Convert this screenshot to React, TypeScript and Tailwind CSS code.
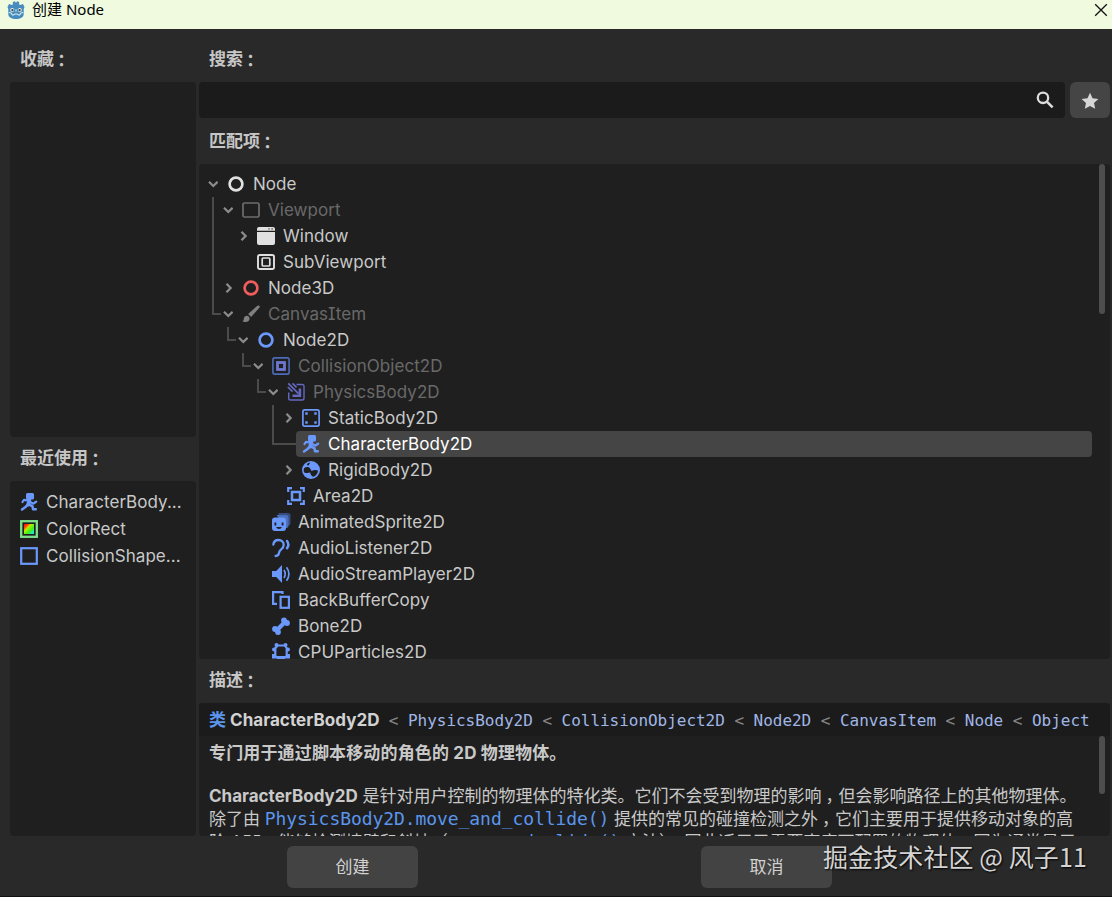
import React from "react";

const BLUE = "#6b98fb";

type IconName =
  | "node" | "viewport" | "window" | "subviewport" | "node3d" | "canvas" | "node2d"
  | "collision" | "physics" | "static" | "character" | "rigid" | "area" | "sprite"
  | "listener" | "audio" | "copy" | "bone" | "particles" | "colorrect" | "shape";

const icons: Record<IconName, React.ReactNode> = {
  node: <circle cx="9" cy="9" r="6.4" fill="none" stroke="#e0e0e0" strokeWidth="2.7" />,
  node3d: <circle cx="9" cy="9" r="6.4" fill="none" stroke="#f05d5d" strokeWidth="2.7" />,
  node2d: <circle cx="9" cy="9" r="6.4" fill="none" stroke={BLUE} strokeWidth="2.7" />,
  viewport: <rect x="1" y="2" width="16" height="14" rx="1.5" fill="none" stroke="#6e6e6e" strokeWidth="1.7" />,
  window: (
    <g fill="#e0e0e0">
      <path d="M2 0h14a2 2 0 0 1 2 2v1.7H0V2a2 2 0 0 1 2-2z" />
      <path d="M0 5h18v11a2 2 0 0 1-2 2H2a2 2 0 0 1-2-2z" />
      <path d="M11.5 1.2h1v1.2h-1zM14.5 1.2h1.2v1.400h-1.200z" fill="#1f1f1f" />
    </g>
  ),
  subviewport: (
    <g fill="none" stroke="#e0e0e0">
      <rect x="1" y="2" width="16" height="14" rx="1.8" strokeWidth="1.9" />
      <rect x="5.2" y="5" width="7.6" height="8" rx="1" strokeWidth="1.7" />
    </g>
  ),
  canvas: (
    <g fill="#808080">
      <path d="M17.3.8c.8.8.4 1.600-.2 2.300l-8 9-3-3 9-8c.7-.6 1.500-1 2.200-.3z" />
      <path d="M5 10.700a3 3 0 0 1 2.600 2.800C7.600 16 5.600 17 3.600 17c-1.400 0-2.600-.4-3.100-1 1.600-.3 1.100-1.500 1.400-3 .3-1.400 1.600-2.400 3.100-2.300z" />
    </g>
  ),
  collision: (
    <g fill="none">
      <rect x=".9" y=".9" width="16.200" height="16.200" rx="1.800" stroke="#4c6bb8" strokeWidth="1.600" />
      <rect x="5.500" y="5.500" width="7" height="7" stroke="#6f76d0" strokeWidth="2.800" />
    </g>
  ),
  physics: (
    <g fill="none" stroke="#6468c0">
      <path d="M9.500 1.500H15.200a1.800 1.800 0 0 1 1.800 1.800V15.200a1.800 1.800 0 0 1-1.800 1.800H3.500a1.800 1.800 0 0 1-1.800-1.800V9.500" strokeWidth="1.400" />
      <path d="M.8 4 5.500 8.700M1.200.3 11.500 10.600M5.500.3l4 4" strokeWidth="1.700" />
      <path d="M12.900 5.500v7.300H5.500" strokeWidth="2.500" />
    </g>
  ),
  static: (
    <g>
      <rect x=".9" y=".9" width="16.200" height="16.200" rx="1.800" fill="none" stroke={BLUE} strokeWidth="1.700" />
      <path d="M3.300 3.300h2.400v2.400H3.300zM12.300 3.300h2.400v2.400h-2.400zM3.300 12.300h2.400v2.400H3.300zM12.300 12.300h2.400v2.400h-2.400z" fill={BLUE} />
    </g>
  ),
  character: (
    <g fill="none" stroke={BLUE} strokeLinecap="round" strokeLinejoin="round">
      <path d="M7.500 0h5a1.500 1.500 0 0 1 1.500 1.500v3.500a1.500 1.500 0 0 1-1.500 1.500h-5A1.500 1.500 0 0 1 6 5V1.500A1.500 1.500 0 0 1 7.500 0z" fill={BLUE} stroke="none" />
      <path d="M9.300 6 8.400 11.500" strokeWidth="4" />
      <path d="M8.500 7.500 4 6.800 2.500 9M10.300 8.800l2.700 1.900 3.200-2" strokeWidth="2.200" />
      <path d="M7.800 11.700 5.500 14 2 16.500M9.500 11.700l3 1.600.5 3 2.800-.1" strokeWidth="2.500" />
    </g>
  ),
  rigid: (
    <g>
      <circle cx="9" cy="9" r="9" fill={BLUE} />
      <path d="M2 7.200C4 5.600 6.700 5.800 8 7.200L9.600 10c2.200-1.300 4.400-1.300 6.400-.4a7.500 7.500 0 0 1-4.500 6.200C9.600 15.300 8.500 13.700 8.200 11.600 6 12.400 3.600 12.200 1.900 11.200a7.500 7.500 0 0 1 .1-4zM4.700 3.200C5.800 2.200 7.200 1.700 8.400 1.600 7.400 2.600 7 3.600 6.800 4.600 6 4.400 5.200 4 4.700 3.200z" fill="#1f1f1f" />
    </g>
  ),
  area: (
    <g fill="none" stroke={BLUE} strokeWidth="2.200">
      <path d="M1.200 5V1.200H5M13 1.200h3.800V5M16.800 13v3.800H13M5 16.800H1.200V13" />
      <rect x="5" y="5" width="8" height="8" strokeWidth="2.500" />
    </g>
  ),
  sprite: (
    <g>
      <path d="M6.500 0H16a2.500 2.500 0 0 1 2.500 2.500V10a2.500 2.500 0 0 1-2.500 2.500V4L6.500 2z" fill="#344a80" />
      <path d="M4.500 2H14a2.500 2.500 0 0 1 2.500 2.500v8a2.500 2.500 0 0 1-2.500 2.500z" fill="#4d70bd" />
      <rect x="0" y="4.500" width="14" height="13.500" rx="3" fill={BLUE} />
      <path d="M2.500 9.500h1.800v3H2.500zM9.700 9.500h1.800v3H9.700zM4.200 14h5.600c-.5 2.600-5.100 2.600-5.600 0z" fill="#1f1f1f" />
    </g>
  ),
  listener: (
    <g fill="none" stroke={BLUE} strokeWidth="2.300" strokeLinecap="round">
      <path d="M1.300 5.500C1.800 2.500 3.800 1 6.500 1c3 0 5.200 2 5.200 4.700 0 4.800-4.200 4.200-4.600 7.800C6.900 15.800 6 17 3.600 17" />
      <path d="M15 2c1.700 2.300 1.700 5 0 7.300" strokeWidth="2.500" />
    </g>
  ),
  audio: (
    <g>
      <path d="M0 6h4.200L10 0v18l-5.800-6H0z" fill={BLUE} />
      <path d="M12 5c1.500 2.500 1.500 5.500 0 8M14.500 2.200c3.200 4 3.200 9.500 0 13.600" fill="none" stroke={BLUE} strokeWidth="1.700" />
    </g>
  ),
  copy: (
    <g fill="none" stroke={BLUE} strokeWidth="2.200">
      <path d="M10.500 3V1.100H1.100v11.700H5" />
      <rect x="8.600" y="5.800" width="8.300" height="11" />
    </g>
  ),
  bone: (
    <g fill={BLUE}>
      <path d="M4.300 10.700 10.700 4.300 13.700 7.300 7.300 13.700z" />
      <circle cx="12" cy="3.300" r="2.900" /><circle cx="15" cy="6" r="2.900" />
      <circle cx="3" cy="12" r="2.900" /><circle cx="6" cy="15" r="2.900" />
    </g>
  ),
  particles: (
    <g fill="none" stroke={BLUE}>
      <path d="M5.500 2.500h7.500l1.700 2.700v7.600L13.200 14H4.800l-1.500-1.200V5.200z" strokeWidth="2.200" />
      <g fill={BLUE} stroke="none">
        <circle cx="4.500" cy="2" r="2" /><circle cx="13.500" cy="2" r="2" />
        <circle cx="2" cy="6.500" r="2" /><circle cx="16" cy="6.500" r="2" />
        <path d="M0 11h4v4.500H0zM14 11h4v4.500h-4zM4.500 13.500h9v4h-9z" />
      </g>
    </g>
  ),
  colorrect: (
    <g>
      <rect x="1.200" y="1.200" width="15.600" height="15.600" fill="none" stroke="#7de08a" strokeWidth="2.300" />
      <path d="M4 4h10v10H4z" fill="url(#hue)" />
      <defs>
        <linearGradient id="hue" x1="0" y1="0" x2="1" y2="1">
          <stop offset=".1" stopColor="#ff1800" />
          <stop offset=".28" stopColor="#ff7000" />
          <stop offset=".36" stopColor="#b8f000" />
          <stop offset=".65" stopColor="#3cf018" />
          <stop offset=".9" stopColor="#20e8d0" />
        </linearGradient>
      </defs>
    </g>
  ),
  shape: <rect x="1.200" y="1.200" width="15.600" height="15.600" fill="none" stroke={BLUE} strokeWidth="2.200" />,
};

function Icon({ name }: { name: IconName }) {
  return (
    <svg width="18" height="18" viewBox="0 0 18 18" className="shrink-0 overflow-visible">
      {icons[name]}
    </svg>
  );
}

function Chevron({ open }: { open: boolean }) {
  return (
    <svg width="10" height="10" viewBox="0 0 10 10" fill="none" stroke="#8c8c8c" strokeWidth="2.300" className="shrink-0">
      {open ? <path d="M1 2.800 5.300 7 9.600 2.800" /> : <path d="M3.500.8 7.600 5 3.500 9.200" />}
    </svg>
  );
}

interface TreeItem {
  depth: number;
  icon: IconName;
  label: string;
  open?: boolean;
  dim?: boolean;
  selected?: boolean;
}

const tree: TreeItem[] = [
  { depth: 0, icon: "node", label: "Node", open: true },
  { depth: 1, icon: "viewport", label: "Viewport", open: true, dim: true },
  { depth: 2, icon: "window", label: "Window", open: false },
  { depth: 2, icon: "subviewport", label: "SubViewport" },
  { depth: 1, icon: "node3d", label: "Node3D", open: false },
  { depth: 1, icon: "canvas", label: "CanvasItem", open: true, dim: true },
  { depth: 2, icon: "node2d", label: "Node2D", open: true },
  { depth: 3, icon: "collision", label: "CollisionObject2D", open: true, dim: true },
  { depth: 4, icon: "physics", label: "PhysicsBody2D", open: true, dim: true },
  { depth: 5, icon: "static", label: "StaticBody2D", open: false },
  { depth: 5, icon: "character", label: "CharacterBody2D", selected: true },
  { depth: 5, icon: "rigid", label: "RigidBody2D", open: false },
  { depth: 4, icon: "area", label: "Area2D" },
  { depth: 3, icon: "sprite", label: "AnimatedSprite2D" },
  { depth: 3, icon: "listener", label: "AudioListener2D" },
  { depth: 3, icon: "audio", label: "AudioStreamPlayer2D" },
  { depth: 3, icon: "copy", label: "BackBufferCopy" },
  { depth: 3, icon: "bone", label: "Bone2D" },
  { depth: 3, icon: "particles", label: "CPUParticles2D" },
];

const indents = ["pl-[9px]", "pl-[24px]", "pl-[39px]", "pl-[54px]", "pl-[69px]", "pl-[84px]"];

function TreeRow({ item }: { item: TreeItem }) {
  const tone = item.selected ? "text-white" : item.dim ? "text-[#696969]" : "text-[#c9c9c9]";
  return (
    <div className={`flex h-[26px] items-center ${indents[item.depth]}`}>
      <div className="flex w-[13px] shrink-0">{item.open !== undefined && <Chevron open={item.open} />}</div>
      <div className={`flex h-[26px] flex-1 items-center gap-2 rounded pl-[6px] ${item.selected ? "bg-[#454545]" : ""}`}>
        <Icon name={item.icon} />
        <span className={`whitespace-nowrap tracking-[0.05px] ${tone}`}>{item.label}</span>
      </div>
    </div>
  );
}

const recent: { icon: IconName; label: string }[] = [
  { icon: "character", label: "CharacterBody..." },
  { icon: "colorrect", label: "ColorRect" },
  { icon: "shape", label: "CollisionShape..." },
];

const parents = ["PhysicsBody2D", "CollisionObject2D", "Node2D", "CanvasItem", "Node", "Object"];

function Heading({ children }: { children: React.ReactNode }) {
  return (
    <div className="flex h-[46px] shrink-0 items-center pl-[10px] font-bold text-[#c6c6c6]">
      <span>{children}</span>
      <span className="-ml-px font-['Noto_Sans_CJK_JP',sans-serif]">：</span>
    </div>
  );
}

function Comma() {
  return <span className="relative left-[4px]">，</span>;
}

function Code({ children }: { children: React.ReactNode }) {
  return (
    <span className="font-['DejaVu_Sans_Mono',monospace] text-[18px] leading-none tracking-[-0.07px] text-[#5b96ec]">
      {children}
    </span>
  );
}

function GodotLogo() {
  return (
    <svg width="18" height="18" viewBox="0 0 18 18" className="mt-px shrink-0">
      <path d="M.5 6 2 3 4.800 4 6 3.300 5.800 1 8 .3 9 2l1-1.700 2.200.7-.2 2.300 1.200.7L16 3l1.500 3-.8 2v5c0 3.500-3.300 5-7.700 5s-7.700-1.500-7.700-5V8z" fill="#478cbf" />
      <path d="M1.800 11.500 4.500 12l.5 2h2l.4-1h3.200l.4 1h2l.5-2 2.700-.5" fill="none" stroke="#e3f1ee" strokeWidth="1" />
      <circle cx="5.200" cy="9" r="2" fill="#e3f1ee" /><circle cx="12.800" cy="9" r="2" fill="#e3f1ee" />
      <circle cx="5.400" cy="9.100" r="1.200" fill="#414c5a" /><circle cx="12.600" cy="9.100" r="1.200" fill="#414c5a" />
      <path d="M9 8.500v2" stroke="#e3f1ee" strokeWidth="1.200" />
    </svg>
  );
}

export default function App() {
  return (
    <div className="relative flex h-[897px] w-[1112px] flex-col overflow-hidden border-b border-[#111111] bg-[#292929] font-['Inter','Noto_Sans_CJK_SC',sans-serif] text-[17px] leading-[23px] [font-feature-settings:'cv08'_1]">
      <header className="flex h-[29px] shrink-0 items-start justify-between bg-[#effadf] pl-[7px] pr-[4px] text-black">
        <div className="flex items-start gap-[7px]">
          <GodotLogo />
          <span className="font-['Noto_Sans','Noto_Sans_CJK_SC',sans-serif] text-[15px] leading-[18px]">创建 Node</span>
        </div>
        <svg width="14" height="14" viewBox="0 0 14 14" className="mt-[3px]">
          <path d="m1.200 1.200 11.600 11.600M12.800 1.200l-11.600 11.600" stroke="#111" strokeWidth="1.300" />
        </svg>
      </header>

      <main className="flex h-[807px] shrink-0 gap-[3px] pl-[10px] pt-[7px]">
        <aside className="flex w-[186px] shrink-0 flex-col">
          <Heading>收藏</Heading>
          <div className="h-[355px] shrink-0 rounded bg-[#1f1f1f]" />
          <div className="-mt-[2px]"><Heading>最近使用</Heading></div>
          <div className="flex h-[355px] shrink-0 flex-col rounded bg-[#1f1f1f] pl-[10px] pt-[7px]">
            {recent.map((item) => (
              <div key={item.label} className="flex h-[27px] items-center gap-2 text-[#c9c9c9]">
                <Icon name={item.icon} />
                <span className="whitespace-nowrap pt-px tracking-[0.05px]">{item.label}</span>
              </div>
            ))}
          </div>
        </aside>

        <section className="flex w-[911px] shrink-0 flex-col">
          <Heading>搜索</Heading>
          <div className="flex h-9 shrink-0 gap-[5px]">
            <div className="flex w-[866px] items-center justify-end rounded bg-[#1b1b1b] pr-[11px]">
              <svg width="18" height="18" viewBox="0 0 18 18" fill="none" stroke="#dcdcdc">
                <circle cx="7" cy="6.800" r="5.200" strokeWidth="2.300" />
                <path d="m10.600 10.400 6 6" strokeWidth="2.600" />
              </svg>
            </div>
            <button className="flex w-10 items-center justify-center rounded-md bg-[#454545]">
              <svg width="18" height="18" viewBox="0 0 18 18" className="mt-px">
                <path d="m9 .8 2.500 5.400 5.900.7-4.400 4 1.200 5.900L9 13.900l-5.200 2.900L5 10.900l-4.400-4 5.900-.7z" fill="#d6d6d6" />
              </svg>
            </button>
          </div>
          <Heading>匹配项</Heading>
          <div className="relative flex h-[495px] shrink-0 overflow-hidden rounded bg-[#1f1f1f] pt-[7px]">
            <svg width="120" height="300" viewBox="0 0 120 300" fill="none" stroke="#4b4b4b" strokeWidth="2" className="absolute left-0 top-0">
              <path d="M14 33V150h8M29 163v13h8M44 189v13h8M59 215v13h8M74 241v39h23" />
            </svg>
            <div className="relative w-[893px] shrink-0">
              {tree.map((item) => <TreeRow key={item.label} item={item} />)}
            </div>
            <div className="-mt-[7px] ml-[7px] h-[150px] w-[6px] rounded-full bg-[#4d4d4d]" />
          </div>
          <div className="-mt-[2px]"><Heading>描述</Heading></div>
          <div className="flex h-[133px] shrink-0 flex-col overflow-hidden rounded bg-[#1f1f1f]">
            <div className="flex h-[33px] shrink-0 items-center whitespace-nowrap bg-[#1b1b1b] pl-[10px] pt-[2px]">
              <span className="w-[21px] font-bold text-[#5b96ec]">类</span>
              <span className="w-[154px] font-bold tracking-[0.05px] text-[#d2d2d2]">CharacterBody2D</span>
              <span className="font-['DejaVu_Sans_Mono',monospace] text-[16px] tracking-[-0.033px] text-[#a0b6e6]">
                {parents.map((name) => (
                  <React.Fragment key={name}>
                    <span className="mx-[4.8px] text-[#858585]">&lt;</span>
                    <span className="mx-[4.8px]">{name}</span>
                  </React.Fragment>
                ))}
              </span>
            </div>
            <div className="flex h-[100px] overflow-hidden text-[#c9c9c9]">
              <div className="w-[890px] shrink-0 whitespace-nowrap pl-[10px] pt-[6px]">
                <p className="font-bold tracking-[0.15px]">专门用于通过脚本移动的角色的 2D 物理物体。</p>
                <p className="mt-5"><b>CharacterBody2D</b> 是针对用户控制的物理体的特化类。它们不会受到物理的影响<Comma />但会影响路径上的其他物理体。</p>
                <p>除了由 <Code>PhysicsBody2D.move_and_collide()</Code> 提供的常见的碰撞检测之外<Comma />它们主要用于提供移动对象的高</p>
                <p>阶 API<Comma />能够检测墙壁和斜坡（<Code>move_and_slide()</Code> 方法）。因此适用于需要高度可配置的物理体<Comma />因为通常是用</p>
              </div>
              <div className="ml-[10px] h-[58px] w-[6px] shrink-0 rounded-full bg-[#4d4d4d]" />
            </div>
          </div>
        </section>
      </main>

      <footer className="flex gap-[283px] pl-[287px] pt-[10px] text-[#d2d2d2]">
        <button className="h-[42px] w-[131px] rounded-md bg-[#434343]">创建</button>
        <button className="h-[42px] w-[131px] rounded-md bg-[#434343]">取消</button>
      </footer>

      <div className="absolute left-[823px] top-[838px] whitespace-nowrap font-['Noto_Sans_CJK_SC',sans-serif] text-[25px] leading-9 tracking-[0.1px] text-[#d4d4d4] [text-shadow:1px_1px_2px_#000]">
        掘金技术社区 @ 风子11
      </div>
    </div>
  );
}
